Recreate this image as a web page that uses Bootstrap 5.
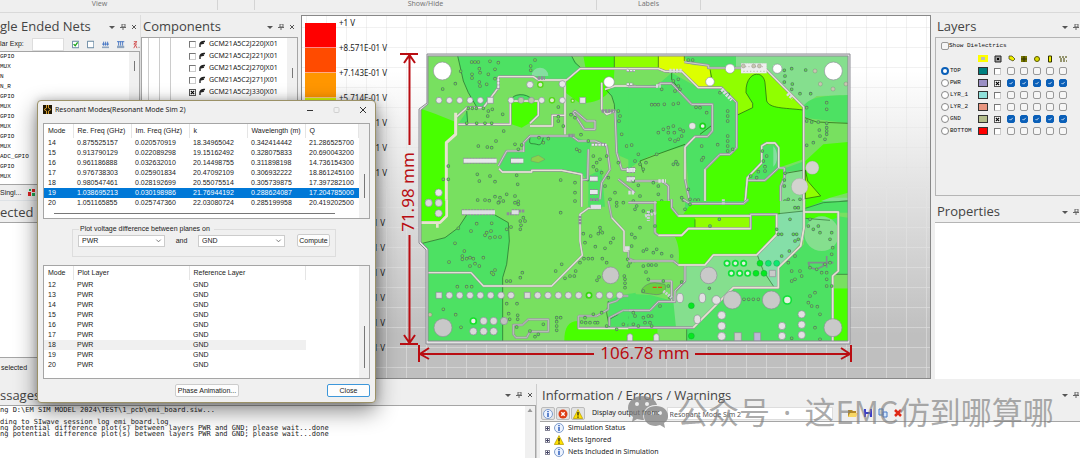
<!DOCTYPE html>
<html lang="en">
<head>
<meta charset="utf-8">
<meta name="viewport" content="width=device-width, initial-scale=1">
<title>SIwave - Resonant Modes</title>
<link href="https://cdn.jsdelivr.net/npm/bootstrap@5.3.0/dist/css/bootstrap.min.css" rel="stylesheet">
<style>
body{height:100vh;overflow:hidden;background:#efefef;font:7px/10px "Liberation Sans",sans-serif;color:#222}
svg{display:block}
button,input,select{font:inherit;color:inherit}
.ribbon{height:13px;border-bottom:1px solid #d9d9d9;font:7px/8px "Noto Sans",sans-serif;color:#777}
.ribbon span{border-right:1px solid #d4d4d4;height:10px;text-align:center;flex:none}
.dock-title{height:22px;font:13px/20px "Open Sans",sans-serif;color:#444;padding:1px 3px 0 2px;white-space:nowrap;overflow:hidden}
.dock-title h2{font:inherit;margin:0;flex:1}
.dock-tools{gap:5px;color:#555}
.dock-tools svg{width:6px;height:6px}
.edge .dock-tools svg:last-child{display:none}
.edge .dock-title{padding-right:1px}
.main-row{min-height:0;margin:2px 0 5px}
.nets-col{width:141px;border-right:1px solid #ddd}
.comp-col{width:160px;padding-right:3px}
.white-box{background:#fff;border:1px solid #a5a5a5}
.netbar{height:14px;gap:8px}
.netbar input[type=text]{width:32px;height:13px;border:1px solid #ddd;background:#fff;padding:0}
.netbar svg{width:9px;height:9px}
.mono{font-family:"Liberation Mono",monospace;font-size:6px;color:#111}
.netlist{height:134px;overflow:hidden;border-left:0}
.vbar{width:10px;background:#f0f0f0;flex:none}
.vbar i{display:block;width:1px;background:#777;margin:9px auto}
.tree li{height:12px;gap:3px;padding-left:38px;font:7px/12px "Noto Sans",sans-serif}
.tree li input{margin-left:9px}
.tree{background:repeating-linear-gradient(90deg,transparent 0 6px,#ccc 6px 7px,transparent 7px 11px) 0 0/38px 100% no-repeat}
.box7{appearance:none;width:7px;height:7px;border:1px solid #777;border-right-color:#ccc;border-bottom-color:#ccc;background:#fff;margin:0;flex:none}
.box7:checked{background:#fff url("data:image/svg+xml,%3Csvg xmlns='http://www.w3.org/2000/svg' viewBox='0 0 6 6'%3E%3Cpath d='M1 1l4 4M5 1L1 5' stroke='%23000' stroke-width='1.4'/%3E%3C/svg%3E");border-color:#555}
.workspace{background:
 linear-gradient(90deg,rgba(205,205,205,.28) 1px,transparent 1px) 4px 0/20px 20px,
 linear-gradient(rgba(205,205,205,.28) 1px,transparent 1px) 0 11px/20px 20px,
 linear-gradient(90deg,rgba(255,255,255,.35) 1px,transparent 1px) 4px 0/20px 20px,
 linear-gradient(rgba(255,255,255,.35) 1px,transparent 1px) 0 11px/20px 20px,
 linear-gradient(#fff 0 15%,#e2e2e2 48%,#bfbfbf 88%);border:1px solid #888;overflow:hidden}
.legend-bar{padding:7px 0 0 3px;font:8px/10px "Noto Sans",sans-serif;color:#222}
.legend-bar li{height:25px;gap:3px}
.legend-bar b{width:31px;height:25px;border-bottom:1px solid #fff8}
.legend-bar li span{margin-top:-5px}
.board{position:absolute;inset:0;width:100%;height:100%}
.right-col{width:149px;padding-left:4px}
.layer-box{border:1px solid #b5b5b5;border-right:0;height:159px;padding:4px 0 0 5px}
.layer-table{margin-top:3px}
.layer-table td{height:12px;padding:0;text-align:center;line-height:8px;width:13px;vertical-align:middle}
.layer-table .lname{text-align:left;width:34px}
.layer-table .lname label{width:34px;gap:1px}
.layer-table .sw{width:16px}
.layer-table input{margin:0;vertical-align:middle}
.swatch{display:block;width:10px;height:8px;border:1px solid #333;margin:auto}
.rnd{appearance:none;width:8px;height:8px;border:1px solid #888;border-radius:50%;background:#fff;flex:none}
.rnd:checked{border:2px solid #0a5fb8;}
.sq{appearance:none;width:8px;height:8px;border:1px solid #999;border-radius:2px;background:#f6f6f6;display:block}
.sq:checked{border-color:#0a5fb8;background:#0a5fb8 url("data:image/svg+xml,%3Csvg xmlns='http://www.w3.org/2000/svg' viewBox='0 0 8 8'%3E%3Cpath d='M2 4l1.5 1.5L6.300 2.500' fill='none' stroke='%23fff'/%3E%3C/svg%3E")}
.bottom{height:74px}
.bottom .dock-title{height:21px}
.msg{width:537px;border-right:1px solid #ccc}
.log{font:7px/6px "DejaVu Sans Mono",monospace;color:#222;margin:0;padding:1px 0;overflow:hidden;flex:1}
.infobar{height:16px;gap:1px;padding:0 4px 0 1px;font:7px/14px "Noto Sans",sans-serif}
.infobar button{width:14px;height:13px;padding:1px;border:1px solid #bbb;border-radius:2px;background:#e3e3e3}
.infobar svg,.info-list svg{width:10px;height:10px}
.infobar select{appearance:none;width:166px;height:13px;border:1px solid #ddd;background:#fff;padding:0 2px;margin:0 13px 0 6px;color:#555}
.infobar .plain{border:0;background:none;width:14px}
.info-list li{height:12px;gap:4px;padding-left:5px;font:7px/12px "Noto Sans",sans-serif}
.plus{width:5px;height:5px;border:1px solid #889;background:linear-gradient(#446,#446) center/3px 1px no-repeat,linear-gradient(#446,#446) center/1px 3px no-repeat;flex:none}
.dlg{position:absolute;left:37px;top:100px;width:339px;height:303px;background:#f0f0f0;border:1px solid #9b9167;border-radius:4px;box-shadow:0 8px 22px #0007,0 0 8px #0003;padding:0 5px 5px 5px}
.dlg-head{height:22px;padding:3px 4px 8px 0;gap:3px}
.dlg-head h1{font:7px/10px "Noto Sans",sans-serif;margin:0;flex:1}
.grid{width:100%;table-layout:fixed;border-collapse:collapse}
.grid th,.grid td{padding:0 0 0 4px;line-height:10px;height:10px;white-space:nowrap;font-weight:400;overflow:hidden}
.grid th{height:14px;border-right:1px solid #e5e5e5}
.sel td{background:#0078d7;color:#fff}
.dim td{background:#f0f0f0}
.hbar{height:1px;background:#777;margin:5px 24px 5px 10px}
.plotset{border:1px solid #ddd;margin:5px 34px 8px 29px;padding:0 5px;height:33px;width:auto}
.plotset legend{float:none;width:auto;font:inherit;margin:0 0 0 1px;padding:0 4px 0 1px}
.plotset select{appearance:none;height:12px;border:1px solid #ccc;padding:0 3px;width:87px;background:#fff url("data:image/svg+xml,%3Csvg xmlns='http://www.w3.org/2000/svg' viewBox='0 0 8 8'%3E%3Cpath d='M1.500 3l2.500 2.500L6.500 3' fill='none' stroke='%23666'/%3E%3C/svg%3E") right 2px center/7px no-repeat}
.wbtn{border:1px solid #ccc;border-radius:2px;background:#fdfdfd;padding:0;height:13px;line-height:10px}
.wm{position:absolute;left:628px;top:394px;color:#808080a8;font:31px/34px "Noto Sans CJK SC",sans-serif;gap:8px;white-space:nowrap}
.wm .dot{font-family:"Noto Sans",sans-serif;margin:0 5px}
</style>
</head>
<body class="d-flex flex-column position-relative">
<header class="ribbon d-flex"><span style="width:218px;padding-right:18px">View</span><span style="width:37px"></span><span style="width:342px">Show/Hide</span><span style="width:104px">Labels</span></header>
<main class="main-row d-flex flex-grow-1">
 <section class="nets-col d-flex flex-column flex-shrink-0">
  <div class="dock-title d-flex ps-0"><h2>gle Ended Nets</h2><div class="dock-tools d-flex align-items-center"></div></div>
  <div class="netbar d-flex align-items-center"><label for="rx" style="width:26px;white-space:nowrap">lar Exp:</label><input id="rx" type="text">
   <svg viewBox="0 0 9 9"><path d="M.5.5h8v8h-8z" fill="#fff" stroke="#456d8c"/><path d="M2 4l2 2 3-4" fill="none" stroke="#19a319" stroke-width="1.6"/></svg>
   <svg viewBox="0 0 9 9"><path d="M.5.5h8v8h-8z" fill="#fff" stroke="#456d8c"/></svg>
   <svg viewBox="0 0 9 9"><path d="M0 4h9M2 1v5M4.500 1v5M7 1v5" stroke="#2b62bd" /><path d="M0 7h9v2H0z" fill="#8fa5bf"/></svg>
   <svg viewBox="0 0 9 9"><path d="M0 1h9M2 1v5M4.500 1v5M7 1v5" stroke="#2b62bd" /><path d="M0 6h9v3H0z" fill="#8fa5bf"/></svg>
   <svg viewBox="0 0 9 9"><path d="M1 1h4L1 4h4M1 9l2-4 2 4" fill="none" stroke="#c33"/><path d="M7 8h1" stroke="#333"/></svg></div>
  <div class="white-box netlist d-flex mono"><div class="flex-grow-1">GPIO<br>MUX<br>N<br>N_R<br>GPIO<br>MUX<br>GPIO<br>MUX<br>GPIO<br>MUX<br>ADC_GPIO<br>GPIO<br>MUX</div><div class="vbar"><i style="height:10px"></i></div></div>
  <div class="d-flex align-items-center" style="height:15px;gap:7px"><a href="#" class="text-reset text-decoration-none">Singl...</a><svg width="7" height="8" viewBox="0 0 7 8"><path d="M0 3h3v4H0zM4 0h3v3H4z" fill="#d22"/><path d="M1 0h2v2H1zM4 4h3v3H4z" fill="#2a5"/></svg></div>
  <div class="dock-title border-top ps-0"><h2>ected</h2></div>
  <div class="white-box flex-grow-1 border-start-0"></div>
  <div style="height:21px;padding:5px 0 0 1px">selected</div>
 </section>
 <section class="comp-col d-flex flex-column flex-shrink-0">
  <div class="dock-title d-flex"><h2>Components</h2><div class="dock-tools d-flex align-items-center"></div></div>
  <div class="white-box flex-grow-1 d-flex"><ul class="tree list-unstyled m-0 flex-grow-1" id="tree"></ul><div class="vbar"><i style="height:10px;margin-top:30px"></i></div></div>
 </section>
 <section class="workspace flex-grow-1 position-relative">
  <svg class="board" viewBox="302 15 628 364" preserveAspectRatio="xMinYMin slice" role="img" aria-label="Voltage difference plot of the board">
   <defs>
    <clipPath id="brd"><path d="M428 55H848V340H428V248L421 241V109L428 103Z"/></clipPath>
    <path id="v1" d="M137 76h0M121 113h0M83 129h0M170 48h0M180 48h0M190 48h0M225 46h0M250 50h0M193 68h0M195 80h0M171 85h0M171 96h0M240 70h0M193 108h0M195 120h0M220 85h0M215 115h0M240 98h0M347 60h0M347 73h0M360 42h0M160 187h0M172 187h0M184 187h0M205 187h0M220 195h0M218 210h0M232 190h0M263 205h0M155 232h0M185 232h0M210 232h0M230 232h0M266 255h0M430 183h0M430 212h0M430 225h0M445 240h0M468 206h0M480 215h0M498 266h0M520 285h0M190 300h0M217 303h0M230 305h0M243 285h0M300 295h0M310 310h0M320 297h0M372 275h0M385 290h0M400 278h0M485 310h0M494 315h0M187 385h0M193 405h0M240 407h0M225 390h0M308 415h0M305 388h0M437 402h0M480 410h0M480 440h0M480 465h0M188 462h0M210 462h0M223 464h0M240 452h0M255 455h0M265 465h0M275 445h0M300 450h0M310 466h0M252 468h0M535 330h0M545 350h0M535 362h0M555 340h0M560 380h0M545 372h0M580 395h0M570 420h0M600 440h0M585 460h0M610 350h0M635 300h0M650 310h0M620 265h0M610 195h0M615 210h0M612 225h0M575 330h0M530 465h0M545 465h0M605 470h0M625 470h0M100 360h0M100 400h0M85 400h0"/>
    <path id="v2" d="M175 42h0M188 42h0M130 105h0M145 100h0M145 120h0M150 130h0M135 135h0M95 130h0M65 176h0M85 176h0M103 175h0M75 176h0M130 174h0M145 172h0M198 184h0M210 185h0M230 200h0M100 250h0M115 245h0M115 260h0M130 240h0M133 260h0M160 255h0M150 250h0M85 260h0M120 280h0M135 285h0M145 280h0M155 270h0M80 325h0M25 325h0M5 297h0M30 355h0M40 370h0M48 350h0M15 345h0M130 355h0M143 355h0M138 347h0M220 335h0M215 342h0M215 300h0M263 296h0M293 195h0M293 210h0M293 225h0M293 270h0M293 285h0M293 300h0M293 315h0M308 310h0M270 140h0M295 145h0M463 73h0M485 68h0M465 90h0M487 114h0M463 108h0M510 143h0M542 143h0M527 72h0M485 130h0M590 170h0M590 190h0M530 185h0M530 225h0M545 228h0M565 228h0M590 232h0M590 245h0M590 255h0M590 265h0M570 270h0M568 252h0M550 290h0M530 298h0M585 280h0M10 405h0M25 418h0M85 420h0M70 410h0M85 445h0M95 465h0M10 465h0M30 450h0M175 430h0M180 460h0M195 462h0M205 462h0M155 455h0M160 462h0M362 390h0M385 377h0M405 362h0M400 345h0M410 330h0M397 315h0M465 382h0M463 402h0M463 420h0M475 460h0M490 465h0M510 460h0M465 465h0M380 395h0M405 375h0"/>
    <path id="v3" d="M230 67h0M185 68h0M130 82h0M228 90h0M240 108h0M210 103h0M255 108h0M275 85h0M168 90h0M120 127h0M225 110h0M215 95h0M148 150h0M142 165h0M142 175h0M155 173h0M165 170h0M175 173h0M205 170h0M165 195h0M180 188h0M193 195h0M102 183h0M230 215h0M240 207h0M235 220h0M316 60h0M325 50h0M330 60h0M318 73h0M316 85h0M288 78h0M250 5h0M300 5h0M310 10h0M437 35h0M275 240h0M286 240h0M316 230h0M322 215h0M440 190h0M422 210h0M450 232h0M465 225h0M478 225h0M482 210h0M495 185h0M507 173h0M520 173h0M532 173h0M562 173h0M575 185h0M527 105h0M505 98h0M555 80h0M557 90h0M562 95h0M550 98h0M541 137h0M570 142h0M510 125h0M595 112h0M587 125h0M605 15h0M638 175h0M645 185h0M640 195h0M552 228h0M546 238h0M630 235h0M630 247h0M630 260h0M628 225h0M127 257h0M155 257h0M170 257h0M275 308h0M306 308h0M281 338h0M284 355h0M308 343h0M308 355h0M425 350h0M437 350h0M425 362h0M425 375h0M425 388h0M370 400h0M345 390h0M360 407h0M305 378h0M385 370h0M85 325h0M122 341h0M138 379h0M510 350h0M500 363h0M512 365h0M525 365h0M540 365h0M548 365h0M535 340h0M560 335h0M575 375h0M605 385h0M625 370h0M643 372h0M655 360h0M655 342h0M645 350h0"/>
    <path id="v4" d="M20 15h0M15 25h0M40 30h0M5 100h0M15 110h0M30 80h0M5 135h0M50 145h0M80 145h0M70 155h0M95 158h0M125 165h0M40 150h0M55 40h0M75 75h0M65 30h0M40 195h0M55 192h0M65 192h0M78 192h0M48 213h0M55 235h0M40 270h0M100 240h0M115 255h0M155 243h0M120 290h0M10 335h0M15 345h0M40 350h0M55 345h0M65 345h0M45 365h0M65 375h0M10 370h0M25 375h0M60 365h0M90 315h0M342 295h0M356 295h0M370 295h0M385 295h0M238 262h0M445 100h0M455 100h0M500 100h0M490 100h0M505 115h0M478 150h0M455 165h0M475 185h0M495 165h0M495 120h0M440 85h0M485 240h0M495 235h0M510 210h0M515 225h0M485 210h0M555 275h0M535 305h0M562 317h0M545 315h0M570 340h0M555 380h0M540 285h0M600 115h0M608 140h0M605 160h0M605 95h0M570 95h0M550 85h0M565 75h0M535 75h0M540 55h0M590 215h0M590 235h0M590 255h0M605 255h0M540 200h0M560 205h0M575 215h0M585 190h0M600 185h0M495 20h0M505 20h0M480 55h0M600 395h0M485 412h0M570 415h0M240 75h0M268 55h0M165 25h0M180 10h0"/>
    <path id="t1" d="M250 92H355L370 102H455L495 68H662M250 92V125L205 185H155L122 215V265L94 290V482M130 235H286V165H370V208L345 232M345 240H412V208H450V105V265M326 318V290L345 270H470L490 285H540L575 300 585 370M252 368L262 378H350V373H440L500 385V482M560 110V190L575 205 600 195 605 320 620 370H662M475 200L508 250H540V225H515L480 195ZM250 360L275 315H326M570 130L600 120H662M585 370L560 410 555 460M520 310L518 400 500 402M610 400L660 440"/>
    <path id="t2" d="M-5 68H85L105 76H155L205 125H275L320 170V305L300 325H270L225 370V472M163 48L235 58V66H333M408 70L521 183V482M-5 122H80L90 112H125L185 175H247V255L232 272H195L165 303V400L180 472H345L352 395 395 350V300L410 291H435L446 305V365L405 403H355M446 366H463V395L452 420V482M-5 405H95L115 420V460L125 482"/>
    <path id="t3" d="M38 215H168L205 255H410L502 163 495 120V40L520 22H558M18 65H75L95 45V-5M580 0L590 50 627 90V150H640V172L662 182M295 372H322L340 355H400V392H345L335 410H303L295 400ZM490 345H545L580 325V308L605 300 620 285H662M490 345V381H662M583 375V350L625 328H662"/>
    <path id="t4" d="M-5 180H130L145 192H225L250 162H380L440 100V40H362V45H145L125 20V-5M75 0V95L85 103H155L175 83H362V42M522 -5V80L512 135 445 200V260H310L190 380H-5M522 33H625V210L608 225V420M165 195V240L135 270V302H85L60 328H-5M125 240V300M60 240H125M-5 5L80 5M160 -5L180 8H340L355 -5"/>
   </defs>
   <path d="M427 53H850V343H426V249L419 242V108L427 102Z" fill="#e2e2e2" stroke="#8b8b93"/>
   <g clip-path="url(#brd)">
    <rect x="415" y="50" width="440" height="295" fill="#78e060"/>
    <!-- upper left quarter -->
    <g transform="translate(415 45) scale(.333333)">
     <g fill="#4de163"><path d="M128 30H470L497 68 452 100H365L355 90H250V125L205 185H185L160 140 145 105 135 60ZM326 318V290L345 270H470L530 290 518 330 520 403 500 385 440 370H350V378H262L250 355 275 315ZM132 230L158 192V230ZM575 120H662V350L615 330 603 310V220L598 175 590 150 572 135ZM500 400L560 370 570 482H520V405ZM288 163C292 145 335 135 350 160Z"/></g>
     <g fill="#48ff00"><path d="M18 188L60 203 122 228V265L92 290V482H18ZM288 168H370V208L345 230 320 245 290 235ZM505 30H600L597 95C590 145 560 170 495 172L452 140V108L495 68H512Z"/></g>
     <path d="M598 30H662V65H598Z" fill="#90ff00"/>
     <path d="M350 90a25 25 0 0 1 50 0z" fill="#85dfa0"/>
     <path d="M128 30L135 60 145 105 160 140 185 183M470 30L480 50 497 65M598 30V65M572 130L590 150 598 175 600 215M288 163C292 142 335 140 350 160M155 195L158 230M500 400L520 405 518 335M345 275C340 300 350 290 365 295S380 290 385 275" fill="none" stroke="#22602a" stroke-width="2"/>
     <g fill="none" stroke-linejoin="round"><use href="#t1" stroke="#96949c" stroke-width="8"/><use href="#t1" stroke="#cfd0cb" stroke-width="3"/><path d="M250 92H355L370 102H455L495 68H662M250 92V125L205 185H155L122 215V265L94 290V482M130 235H286V165H370V208L345 232M345 240H412V208H450V105V265M252 368L262 378H350V373H440L500 385V482M560 110V190L575 205 600 195M570 130L600 120H662" stroke="#e6e3d4" stroke-width="4"/>
     <path d="M122 200V265L94 290V482" stroke="#e6e3cd" stroke-width="9"/></g>
     <use href="#v1" fill="none" stroke="#587f66" stroke-width="11" stroke-linecap="round"/><use href="#v1" fill="none" stroke="#62ee3c" stroke-width="6" stroke-linecap="round"/>
     <g stroke="#8e8b9a" stroke-dasharray="7 2"><path d="M145 344H245M287 344H325M525 398H548M525 438H548M525 465H550M635 372H660M635 400H660" stroke-width="18"/><path d="M635 73H660M635 115H655M250 98V130M368 96H390M460 268H480M530 296H575M560 195H600" stroke-width="10"/></g><path d="M146 344H245M288 344H325M525 398H548M525 438H548M635 372H660M635 400H660" stroke="#e8e8ec" stroke-width="12"/><path d="M635 73H660M635 115H655M250 98V130M530 296H575" stroke="#e8e8ec" stroke-width="6" stroke-dasharray="7 3"/>
     <path d="M350 335l20-7 20 12-20 10-22-5z" fill="#8bd34b" stroke="#777"/>
     <g fill="#fff" stroke="#91919b" stroke-width="2"><circle cx="82" cy="75" r="27"/><circle cx="582" cy="108" r="16"/></g>
     <g fill="#e7e7e7" stroke="#8b8b9b" stroke-width="2"><circle cx="72" cy="163" r="9"/><circle cx="103" cy="163" r="9"/><circle cx="134" cy="163" r="9"/><circle cx="165" cy="163" r="9"/><circle cx="196" cy="163" r="9"/><path d="M217 154h18v18h-18zM494 154h18v18h-18z"/><circle cx="288" cy="163" r="9"/><circle cx="318" cy="163" r="9" fill="#bcc7ac"/><circle cx="349" cy="163" r="9" fill="#bcc7ac"/><circle cx="380" cy="163" r="9"/><circle cx="442" cy="163" r="9"/><circle cx="345" cy="116" r="10"/><circle cx="442" cy="114" r="10"/><circle cx="71" cy="440" r="11"/><circle cx="41" cy="470" r="11"/><circle cx="71" cy="470" r="11"/></g>
     <g fill="#dfe9d0" stroke="#55d817" stroke-width="4"><circle cx="411" cy="163" r="8"/><circle cx="376" cy="116" r="8"/><circle cx="473" cy="164" r="5"/></g>
    </g>
    <!-- upper right quarter -->
    <g transform="translate(630 45) scale(.333333)">
     <path d="M318 30H654V148L560 150 520 180 410 80 318 66ZM450 380L524 345V482H450ZM524 455H654V482H524Z" fill="#85df8e"/>
     <path d="M520 180C545 150 580 150 654 147V232L524 215ZM-5 122L85 115 125 80 205 125H275L320 170V305L300 325H270L225 370V472H180L165 300 60 330 30 345 -5 370ZM163 30H318V66H235V58L163 48ZM355 402L395 360V300L430 293 445 310V365L405 402ZM450 380L524 372V345L450 372Z" fill="#4de163"/>
     <path d="M-5 30H90V70L-5 65ZM240 66L410 75 520 180V192L430 185 410 165 405 110 380 85 350 110 348 140 368 175V185L320 208V170L275 128H240Z" fill="#90ff00"/>
     <path d="M85 30H163L170 52 195 58H240V120L205 125 155 78H100L85 65Z" fill="#dcff00"/>
     <path d="M320 208L368 185V172L348 140C346 75 400 70 405 110L410 165C420 188 460 185 520 192V340L446 365V310L430 293 395 300V360L355 402 350 472H225V370L270 328 300 325 320 305ZM370 402H405L446 368 465 372 452 420V482H350V402ZM526 345L580 295 654 288V440L600 455 526 482Z" fill="#48ff00"/>
     <path d="M430 300c15 15 15 50 0 62z" fill="#85dfa0"/>
     <path d="M526 372L533 405 572 450 526 458Z" fill="#90ff00" stroke="#21570e" stroke-width="2"/>
     <path d="M320 208L368 185V172L348 140C346 75 400 70 405 110L410 165C420 188 460 185 520 192M85 30V65M524 215L560 228 654 232M165 295L90 322 30 345 40 380M465 382L524 372M240 70L245 95M125 80V100L140 120M526 478L600 468 654 465M163 30V45M210 265L243 240" fill="none" stroke="#21570e" stroke-width="2"/>
     <g fill="none" stroke-linejoin="round"><use href="#t2" stroke="#96949c" stroke-width="8"/><use href="#t2" stroke="#cfd0cb" stroke-width="3"/><path d="M-5 68H85L105 76H155L205 125H275M408 70L521 183V482M195 272L165 303V400M180 474H345L352 395 395 350V300L410 291H435L446 305V365M225 370V472" stroke="#e6e3d4" stroke-width="4"/></g>
     <use href="#v2" fill="none" stroke="#587f66" stroke-width="11" stroke-linecap="round"/><use href="#v2" fill="none" stroke="#5be848" stroke-width="6" stroke-linecap="round"/>
     <path d="M-5 373H12M-5 400H12M-5 440H12M78 120H92M85 405H108M275 130L305 162M472 143L488 157M118 74H158" stroke="#dcdae3" stroke-width="11" stroke-dasharray="7 3" fill="none"/>
     <path d="M333 52h77v30h-77z" fill="#eee" stroke="#b5b5b5" stroke-dasharray="4 3"/><path d="M345 62h60M340 76h65" stroke="#c7c7bb" stroke-width="4" stroke-dasharray="4 6"/>
     <g fill="#c8c6b0" stroke="#777"><circle cx="340" cy="60" r="6"/><circle cx="371" cy="60" r="6"/><circle cx="388" cy="60" r="6"/><circle cx="555" cy="75" r="6"/><circle cx="571" cy="114" r="6"/><circle cx="609" cy="129" r="6"/><circle cx="648" cy="114" r="6"/></g>
     <g fill="#fff" stroke="#91919b" stroke-width="2"><circle cx="610" cy="75" r="27"/><circle cx="300" cy="68" r="14"/><circle cx="442" cy="68" r="14"/><circle cx="240" cy="107" r="13"/></g>
     <circle cx="187" cy="240" r="10" fill="#e6e6e6" stroke="#777"/><circle cx="218" cy="240" r="8" fill="#eee" stroke="#1cd11d" stroke-width="5"/>
     <g fill="#d3d3cf" stroke="#999"><circle cx="547" cy="365" r="20"/><circle cx="509" cy="422" r="25"/></g>
    </g>
    <!-- lower left quarter -->
    <g transform="translate(415 200) scale(.333333)">
     <path d="M18 0H95V40L75 60H18ZM448 420C448 380 460 360 490 360V383H662V420Z" fill="#48ff00"/>
     <path d="M18 128L90 110 130 80 155 42H240L280 65 283 120 275 190 263 230V420H36V145ZM580 300L610 285 662 275V380H580ZM520 0H550L560 18H520Z" fill="#4de163"/>
     <path d="M18 128L90 110 130 80 155 42M240 42L280 65 283 120 275 190 263 230V420M580 300L575 335 583 380M583 355L610 340" fill="none" stroke="#22602a" stroke-width="2"/>
     <g fill="none" stroke-linejoin="round"><use href="#t3" stroke="#96949c" stroke-width="7"/><use href="#t3" stroke="#bdc4bd" stroke-width="3"/><path d="M38 215H168L205 255H410L502 163 495 120V40L520 22H558M590 50L627 90V150H640M490 383H662" stroke="#e2e0d4" stroke-width="4"/><path d="M18 65H75L95 45V-5M67 65V80" stroke="#e6e3cd" stroke-width="8"/></g>
     <use href="#v3" fill="none" stroke="#587f66" stroke-width="11" stroke-linecap="round"/><use href="#v3" fill="none" stroke="#62ee3c" stroke-width="6" stroke-linecap="round"/>
     <g stroke="#8e8b9a" stroke-dasharray="7 2"><path d="M140 34H240M290 34H312" stroke-width="18"/><path d="M275 38H290M312 30H328M525 17H560M630 142H644M495 45V70" stroke-width="9"/></g><path d="M141 34H240M290 34H311M630 142H644M527 17H558" stroke="#dedee4" stroke-width="12"/>
     <g fill="#d9d9d9" stroke="#8b8b9b" stroke-width="2"><path d="M63 274h18v18H63zM328 274h18v18h-18z"/><circle cx="103" cy="283" r="10"/><circle cx="134" cy="283" r="10"/><circle cx="165" cy="283" r="10"/><circle cx="196" cy="283" r="10"/><circle cx="227" cy="283" r="10"/><circle cx="258" cy="283" r="10"/><circle cx="288" cy="283" r="10"/><circle cx="368" cy="283" r="10"/><circle cx="399" cy="283" r="10"/><circle cx="430" cy="283" r="10"/><circle cx="460" cy="283" r="10"/><circle cx="491" cy="283" r="10"/><circle cx="553" cy="283" r="10"/><circle cx="584" cy="283" r="10"/><circle cx="614" cy="283" r="10"/><circle cx="206" cy="360" r="11"/><circle cx="236" cy="360" r="11"/><circle cx="267" cy="360" r="11" fill="#c0c0c0"/><circle cx="175" cy="391" r="11"/><circle cx="206" cy="391" r="11"/><circle cx="236" cy="391" r="11"/><circle cx="41" cy="6" r="11"/><circle cx="71" cy="6" r="11"/><circle cx="71" cy="37" r="11"/><rect x="637" y="398" width="16" height="28" rx="8"/></g>
     <g fill="#c8c8c8" stroke="#909098" stroke-width="2"><circle cx="84" cy="380" r="27"/><circle cx="587" cy="223" r="25"/></g>
     <circle cx="175" cy="360" r="9" fill="#eee" stroke="#16e22a" stroke-width="5"/><circle cx="522" cy="283" r="8" fill="#ddd" stroke="#39d711" stroke-width="5"/><circle cx="45" cy="341" r="6" fill="#c2c3a0" stroke="#777"/>
    </g>
    <!-- lower right quarter -->
    <g transform="translate(630 200) scale(.333333)">
     <path d="M165 192H225L250 162H382L432 258H310L190 380H138L115 310 165 240ZM450 0H522V35L445 42Z" fill="#85df8e"/>
     <path d="M-5 278L60 282 130 300 138 380H-5ZM445 200L522 130V30L654 50V225H610V420H170V382H190L310 260H445ZM165 0H360L345 10H230L165 30Z M526 0H654V35H526Z" fill="#4de163"/>
     <path d="M442 40L522 30V115L445 200V258H430L382 162 442 100Z" fill="#85dfa8"/>
     <path d="M75 0H120L145 45H362L440 42V100L380 162H250L225 192H145C150 150 145 130 135 108L80 100 72 50ZM180 12H340L360 0H450V40H160ZM526 0H580L526 22ZM526 33H620V50L600 58 526 52ZM612 262H654V420H612ZM-5 383H83V420H-5Z" fill="#48ff00"/>
     <path d="M195 50H362V82H195Z" fill="#90ff00"/><path d="M83 383H170V420H83ZM612 220H654V262H612Z" fill="#78e060"/>
     <circle cx="575" cy="98" r="52" fill="#85df8e"/>
     <path d="M35 275C30 260 55 245 75 245L105 250C112 270 95 285 70 280Z" fill="#69d043" stroke="#68806f" stroke-width="2"/><path d="M68 259h12M84 259h12" stroke="#e04d11" stroke-width="4"/>
     <path d="M382 162L400 210 432 258M445 38L522 30M195 55V82M526 52L600 58M526 22L580 5 654 0M612 220H654M170 385V420" fill="none" stroke="#2c6934" stroke-width="2"/>
     <g fill="none" stroke-linejoin="round"><use href="#t4" stroke="#96949c" stroke-width="8"/><use href="#t4" stroke="#cfd0cb" stroke-width="3"/><path d="M145 192H225L250 162H380L440 100V40M145 45H362M85 103H155L175 83H362M522 -5V80L512 135 445 200V260H310L190 380M522 33H625V210L608 225V420" stroke="#e6e3cf" stroke-width="5"/><path d="M535 185H580V195L560 205 540 200ZM570 185H610M590 165V200" stroke="#7f8e8d" stroke-width="5"/></g>
     <use href="#v4" fill="none" stroke="#587f66" stroke-width="11" stroke-linecap="round"/><use href="#v4" fill="none" stroke="#5be848" stroke-width="6" stroke-linecap="round"/>
     <path d="M45 45L80 35M55 30V60M100 270L125 290M280 10V-5" stroke="#cfcdd8" stroke-width="9" stroke-dasharray="6 3" fill="none"/>
     <g fill="#e3efe0" stroke="#10e037" stroke-width="5"><circle cx="291" cy="187" r="8"/><circle cx="316" cy="187" r="8"/><circle cx="341" cy="187" r="8"/><circle cx="304" cy="217" r="8"/><circle cx="329" cy="217" r="8"/><circle cx="353" cy="217" r="8"/><circle cx="472" cy="297" r="12"/></g>
     <g fill="#05e820" stroke="#1b8c3a"><circle cx="390" cy="187" r="9"/><circle cx="415" cy="187" r="9" fill="#0ee870"/><circle cx="440" cy="187" r="9" fill="#0ee870"/><circle cx="378" cy="217" r="9"/><circle cx="402" cy="217" r="9"/><circle cx="184" cy="314" r="9"/><circle cx="184" cy="405" r="9"/></g>
     <g fill="#c9c9c9" stroke="#8e9097" stroke-width="2"><circle cx="236" cy="223" r="25"/><circle cx="307" cy="297" r="27"/><circle cx="424" cy="297" r="27"/><circle cx="609" cy="380" r="27"/><path d="M418 208h19v19h-19zM313 395h21v25h-21z"/><path d="M372 395h20v25h-20z" fill="#bdb6d8"/></g>
     <g fill="#e2e0e2" stroke="#8e9097" stroke-width="2"><ellipse cx="150" cy="291" rx="10" ry="14"/><ellipse cx="217" cy="291" rx="10" ry="14"/><ellipse cx="202" cy="355" rx="10" ry="13"/><circle cx="259" cy="297" r="13"/><circle cx="275" cy="343" r="12"/><circle cx="275" cy="375" r="12"/><circle cx="275" cy="406" r="12"/><circle cx="456" cy="375" r="11"/><circle cx="456" cy="405" r="11"/><circle cx="515" cy="340" r="11"/><circle cx="515" cy="371" r="11"/><circle cx="515" cy="402" r="11"/><rect x="71" y="398" width="16" height="28" rx="8"/><rect x="-8" y="398" width="16" height="28" rx="8"/></g>
    </g>
   </g>
   <path d="M428 55H848V340H428V248L421 241V109L428 103Z" fill="none" stroke="#8b8b93" stroke-width="1"/>
   <g fill="none" stroke="#b90d12" stroke-width="2"><path d="M400 53H418M400 343H418M409.500 54V144M404 62L409.500 54 415 62M409.500 234V342M404 334L409.500 342 415 334M419 344V361M851 344V361M420 353H594M429 347L420 353 429 358M695 353H850M841 347L850 353 841 358"/></g>
   <g fill="#b90d12" font-family="Noto Sans, sans-serif" font-size="17"><text x="645" y="358" text-anchor="middle">106.78 mm</text><text transform="translate(414 191) rotate(-90)" text-anchor="middle">71.98 mm</text></g>
  </svg>
  <ul class="legend-bar list-unstyled m-0 position-relative" id="legend"></ul>
 </section>
 <aside class="right-col edge d-flex flex-column flex-shrink-0">
  <div class="dock-title d-flex"><h2>Layers</h2><div class="dock-tools d-flex align-items-center"></div></div>
  <div class="layer-box mono">
   <div class="d-flex align-items-center" style="height:8px"><input class="sq" type="checkbox" id="diel"><label for="diel">Show Dielectrics</label></div>
   <table class="layer-table"><tbody id="layers"></tbody></table>
  </div>
  <div class="dock-title d-flex mt-1"><h2>Properties</h2><div class="dock-tools d-flex align-items-center"></div></div>
  <div class="flex-grow-1 bg-white" style="border-top:1px solid #b5b5b5"></div>
 </aside>
</main>
<footer class="bottom d-flex flex-shrink-0">
 <section class="msg d-flex flex-column flex-shrink-0"><div class="dock-title d-flex ps-0"><h2>ssages</h2><div class="dock-tools d-flex align-items-center"></div></div>
  <div class="white-box flex-grow-1 d-flex border-start-0 border-bottom-0"><pre class="log">ng D:\EM SIM MODEL 2024\TEST\1_pcb\emi_board.siw...

ding to SIwave session log emi_board.log
ng potential difference plot(s) between layers PWR and GND; please wait...done
ng potential difference plot(s) between layers PWR and GND; please wait...done</pre><div class="vbar"><svg width="10" height="8" viewBox="0 0 10 8"><path d="M2.500 6L5 2.500 7.500 6z" fill="#999"/></svg></div></div></section>
 <section class="edge flex-grow-1 d-flex flex-column" style="padding-left:3px"><div class="dock-title d-flex"><h2>Information / Errors / Warnings</h2><div class="dock-tools d-flex align-items-center"></div></div>
  <div class="infobar d-flex align-items-center"><button aria-label="Information" data-i="i"></button><button aria-label="Errors" data-i="e"></button><button aria-label="Warnings" data-i="w"></button>
   <label for="out" style="margin-left:6px">Display output from:</label><select id="out"><option>Resonant Mode Sim 2</option></select>
   <button class="plain" aria-label="Open"><svg viewBox="0 0 10 10"><path d="M0 2h4l1 1h3v6H0z" fill="#b5892b"/><path d="M2 5h8L8 9H0z" fill="#f7d765"/></svg></button><button class="plain" aria-label="Save"><svg viewBox="0 0 10 10"><path d="M1 1h8v8H1z" fill="#3b3fc4"/><path d="M3 1h4v3H3zM3 6h4v3H3z" fill="#e8ecff"/></svg></button><button class="plain" aria-label="Copy"><svg viewBox="0 0 10 10"><path d="M1 1h4v6H1zM5 4h4v5H5z" fill="#d5e6fb" stroke="#4279c4"/></svg></button><button class="plain" aria-label="Delete"><svg viewBox="0 0 10 10"><path d="M2 2l6 6M8 2L2 8" stroke="#df2815" stroke-width="2.500"/></svg></button></div>
  <ul class="info-list list-unstyled m-0 flex-grow-1 bg-white" style="border-top:1px solid #a5a5a5"><li class="d-flex align-items-center"><i class="plus"></i><span data-i="i"></span>Simulation Status</li><li class="d-flex align-items-center"><i class="plus"></i><span data-i="w"></span>Nets Ignored</li><li class="d-flex align-items-center"><i class="plus"></i><span data-i="i"></span>Nets Included in Simulation</li></ul></section>
</footer>

<section class="dlg d-flex flex-column" role="dialog" aria-labelledby="dt">
 <div class="dlg-head d-flex align-items-center"><svg width="9" height="9" viewBox="0 0 9 9"><path d="M0 0h9v9H0z" fill="#1d1503"/><path d="M3.500 0v3L1 4.500 3.500 6v3M5.500 0v3L8 4.500 5.500 6v3" fill="none" stroke="#d09a2d"/></svg><h1 id="dt">Resonant Modes(Resonant Mode Sim 2)</h1>
  <svg width="60" height="8" viewBox="0 0 60 8" fill="none" stroke="#333"><path d="M1 4.500h6M54 1l6 6M60 1l-6 6"/><rect x="28" y="1.500" width="5" height="5" rx="1" stroke="#d0d0d0"/></svg></div>
 <div class="white-box d-flex" style="height:96px"><div class="flex-grow-1"><table class="grid"><colgroup><col style="width:29px"><col style="width:58px"><col style="width:58px"><col style="width:58px"><col style="width:58px"><col></colgroup><thead><tr><th>Mode</th><th>Re. Freq (GHz)</th><th>Im. Freq (GHz)</th><th>k</th><th>Wavelength (m)</th><th>Q</th></tr></thead><tbody id="modes"></tbody></table><div class="hbar"></div></div><div class="vbar"><i style="height:24px;margin-top:50px"></i></div></div>
 <fieldset class="plotset"><legend>Plot voltage difference between planes on</legend><div class="d-flex align-items-center"><select aria-label="First plane"><option>PWR</option></select><label for="p2" style="width:33px;text-align:center">and</label><select id="p2"><option>GND</option></select><button class="wbtn" style="width:33px;margin-left:12px">Compute</button></div></fieldset>
 <div class="white-box d-flex" style="height:114px"><div class="flex-grow-1"><table class="grid" style="width:262px"><colgroup><col style="width:29px"><col style="width:116px"><col></colgroup><thead><tr><th>Mode</th><th>Plot Layer</th><th>Reference Layer</th></tr></thead><tbody id="plots"></tbody></table></div><div class="vbar"><i style="height:42px;margin-top:60px"></i></div></div>
 <div class="d-flex justify-content-between" style="padding:5px 0 0 132px"><button class="wbtn" style="width:64px">Phase Animation...</button><button class="wbtn" style="width:43px;border-color:#3d97da">Close</button></div>
</section>

<div class="wm d-flex align-items-center"><svg width="41" height="34" viewBox="0 0 41 34"><path fill="#808080c0" fill-rule="evenodd" d="M14 1C6 1 0 6 0 13c0 4 2 7 5 9l-1 5 5-3 5 1h2c-3-9 4-16 13-15C28 5 22 1 14 1ZM9 7a2 2 0 1 1 0 4 2 2 0 0 1 0-4m10 0a2 2 0 1 1 0 4 2 2 0 0 1 0-4M28 11c-7 0-12 4-12 10s5 10 12 10l4-1 5 3-1-5c3-2 4-4 4-7 0-6-5-10-12-10m-4 5a2 2 0 1 1 0 4 2 2 0 0 1 0-4m8 0a2 2 0 1 1 0 4 2 2 0 0 1 0-4"/></svg><div>公众号<span class="dot">&nbsp;·&nbsp;</span>这EMC仿到哪算哪</div></div>

<script>
const $=id=>document.getElementById(id);
document.querySelectorAll('.dock-tools').forEach(e=>e.innerHTML='<svg viewBox="0 0 6 6"><path d="M0 2h6L3 5z" fill="#555"/></svg><svg viewBox="0 0 6 6"><path d="M2 0h3v3H1.500M2 0v3M0 3.500h6M3 3v3" fill="none" stroke="#666"/></svg><svg viewBox="0 0 6 6"><path d="M1 1l4 4M5 1L1 5" stroke="#555"/></svg>');
const icons={i:'<circle cx="5" cy="5" r="4.500" fill="#eef4ff" stroke="#7d9ccc"/><path d="M5 2v1.300M5 4v4" stroke="#2155b9" stroke-width="1.400"/>',e:'<circle cx="5" cy="5" r="4.500" fill="#de3c14"/><path d="M3.300 3.300l3.400 3.400M6.700 3.300L3.300 6.700" stroke="#fff" stroke-width="1.400"/>',w:'<path d="M5 .5L9.700 9.500H.3z" fill="#ffe000" stroke="#b39b00" stroke-width=".7"/><path d="M5 3v3.500M5 7.500v1.200" stroke="#111" stroke-width="1.200"/>'};
document.querySelectorAll('[data-i]').forEach(e=>e.innerHTML=`<svg viewBox="0 0 10 10">${icons[e.dataset.i]}</svg>`);
$('tree').innerHTML=['220','221','270','271','330'].map((n,i)=>`<li class="d-flex align-items-center"><input class="box7" type="checkbox" id="c${n}"${i==4?' checked':''}><svg width="7" height="8" viewBox="0 0 7 8"><path d="M1 7V4Q2 1 6 1.500M1 4l4-1" fill="none" stroke="#222" stroke-width="1.400"/></svg><label for="c${n}">GCM21A5C2J${n}JX01</label></li>`).join('');
const lv=['+1','+8.571E-01','+7.143E-01','+5.714E-01','+4.286E-01','+2.857E-01','+1.429E-01','0','-1.429E-01','-2.857E-01','-4.286E-01','-5.714E-01','-7.143E-01','-8.571E-01'];
const lc=['#f00','#ff4b00','#ff9600','#dcff00','#90ff00','#48ff00','#78e060','#4de163','#85df8e','#85dfa8','#00e0c0','#00a0ff','#0050ff','#00f'];
$('legend').innerHTML=lv.map((t,i)=>`<li class="d-flex"><b style="background:${lc[i]}"></b><span>${t} V</span></li>`).join('');
const modes=`14 0.875525157 0.020570919 18.34965042 0.342414442 21.286525700
15 0.913790129 0.022089298 19.15162492 0.328075833 20.690043200
16 0.961186888 0.032632010 20.14498755 0.311898198 14.736154300
17 0.976738303 0.025901834 20.47092109 0.306932222 18.861245100
18 0.980547461 0.028192699 20.55075514 0.305739875 17.397282100
19 1.038695213 0.030198986 21.76944192 0.288624087 17.204785000
20 1.051165855 0.025747360 22.03080724 0.285199958 20.419202500`;
$('modes').innerHTML=modes.split('\n').map(r=>`<tr${r.startsWith('19')?' class="sel"':''}>${r.split(' ').map(c=>`<td>${c}</td>`).join('')}</tr>`).join('');
$('plots').innerHTML=[12,13,14,15,16,17,18,19,20].map(n=>`<tr${n==18?' class="dim"':''}><td>${n}</td><td>PWR</td><td>GND</td></tr>`).join('');
const heads=['<path d="M0 0h10v7H0z" fill="#ff0"/><path d="M3 2h4v3H3z" fill="#bbb"/>','<path d="M2 1h6v6H2z" fill="#999" stroke="#222"/><path d="M4 3h2v2H4z"/>','<path d="M3 1h3l3 3-2 2-4-2z" fill="#ee0" stroke="#331" stroke-width=".7"/>','<path d="M2 1h6v6H2z" fill="#770"/><path d="M2 4h6M5 1v6" stroke="#330"/>','<circle cx="5" cy="4" r="2.500" fill="#dd0" stroke="#550"/>','<path d="M3.500 1h3v6h-3z" fill="#ee0" stroke="#330"/>','<path d="M1 2h8M2 4h6M2 6h7" stroke="#774" stroke-width="1.500" stroke-dasharray="2 1"/>'];
const L=[['TOP','#008080',0],['PWR','#9a8fc4',1],['LYR_1','#8fe0da',0],['LYR_2','#e8957f',0],['GND','#b5be8c',1],['BOTTOM','#f00',0]];
$('layers').innerHTML='<tr><td class="lname"></td>'+heads.map((h,i)=>`<td${i==0?' class="sw"':''}><svg class="mx-auto" width="10" height="8" viewBox="0 0 10 8">${h}</svg></td>`).join('')+'</tr>'+L.map(([n,c,k],i)=>`<tr><td class="lname"><label class="d-flex align-items-center"><input class="rnd" type="radio" name="layer"${i?'':' checked'}>${n}</label></td><td class="sw"><span class="swatch" style="background:${c}"></span></td><td><input class="box7 d-block mx-auto" type="checkbox" aria-label="${n} visible"${k?' checked':''}></td>${'abcde'.split('').map(x=>`<td><input class="sq mx-auto" type="checkbox" aria-label="${n} ${x}"${k?' checked':''}></td>`).join('')}</tr>`).join('');
</script>
<script src="https://cdn.jsdelivr.net/npm/bootstrap@5.3.0/dist/js/bootstrap.bundle.min.js"></script>
</body>
</html>
